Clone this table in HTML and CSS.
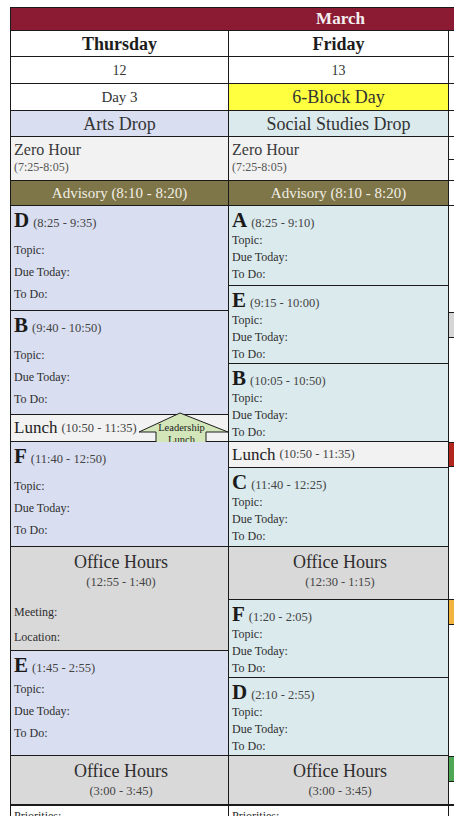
FILE: index.html
```html
<!DOCTYPE html>
<html lang="en">
<head>
<meta charset="utf-8">
<title>March Planner</title>
<link rel="stylesheet" href="styles.css">
</head>
<body>
<div class="sheet">
  <div class="month">March</div>
  <div class="hdr">
    <div class="cell day">Thursday</div>
    <div class="cell day">Friday</div>
    <div class="cell day"></div>

    <div class="cell date">12</div>
    <div class="cell date">13</div>
    <div class="cell date"></div>

    <div class="cell dtype">Day 3</div>
    <div class="cell dtype six">6-Block Day</div>
    <div class="cell dtype"></div>

    <div class="cell drop thu">Arts Drop</div>
    <div class="cell drop fri">Social Studies Drop</div>
    <div class="cell drop"></div>

    <div class="cell zero"><div class="zt">Zero Hour</div><div class="zs">(7:25-8:05)</div></div>
    <div class="cell zero"><div class="zt">Zero Hour</div><div class="zs">(7:25-8:05)</div></div>
    <div class="cell blank"><div class="zsplit"></div></div>

    <div class="cell adv">Advisory (8:10 - 8:20)</div>
    <div class="cell adv">Advisory (8:10 - 8:20)</div>
    <div class="cell blank"></div>
  </div>

  <div class="sched">
    <div class="col">
      <div class="blk thu h105">
        <div class="bh"><span class="letter">D</span> <span class="time">(8:25 - 9:35)</span></div>
        <div class="lines wide"><div>Topic:</div><div>Due Today:</div><div>To Do:</div></div>
      </div>
      <div class="blk thu h104">
        <div class="bh"><span class="letter">B</span> <span class="time">(9:40 - 10:50)</span></div>
        <div class="lines wide"><div>Topic:</div><div>Due Today:</div><div>To Do:</div></div>
      </div>
      <div class="blk lunch h27">
        <span class="lt">Lunch</span> <span class="time">(10:50 - 11:35)</span>
        <svg class="arrow" width="92" height="30" viewBox="0 0 92 30">
          <polygon points="42,1 90,20 68,20 68,40 18,40 18,20 1,20" fill="#d2e6b9" stroke="#1e1e1e" stroke-width="1"/>
          <text x="43.5" y="19" text-anchor="middle" font-family="Liberation Serif, serif" font-size="10.5" fill="#222">Leadership</text>
          <text x="43.5" y="31" text-anchor="middle" font-family="Liberation Serif, serif" font-size="10.5" fill="#222">Lunch</text>
        </svg>
      </div>
      <div class="blk thu h105">
        <div class="bh"><span class="letter">F</span> <span class="time">(11:40 - 12:50)</span></div>
        <div class="lines wide"><div>Topic:</div><div>Due Today:</div><div>To Do:</div></div>
      </div>
      <div class="blk oh h104">
        <div class="oht">Office Hours</div>
        <div class="ohs">(12:55 - 1:40)</div>
        <div class="ohl"><div>Meeting:</div><div>Location:</div></div>
      </div>
      <div class="blk thu h105">
        <div class="bh"><span class="letter">E</span> <span class="time">(1:45 - 2:55)</span></div>
        <div class="lines wide tight"><div>Topic:</div><div>Due Today:</div><div>To Do:</div></div>
      </div>
      <div class="blk oh h49">
        <div class="oht">Office Hours</div>
        <div class="ohs">(3:00 - 3:45)</div>
      </div>
    </div>

    <div class="col">
      <div class="blk fri h80">
        <div class="bh"><span class="letter">A</span> <span class="time">(8:25 - 9:10)</span></div>
        <div class="lines"><div>Topic:</div><div>Due Today:</div><div>To Do:</div></div>
      </div>
      <div class="blk fri h78">
        <div class="bh"><span class="letter">E</span> <span class="time">(9:15 - 10:00)</span></div>
        <div class="lines"><div>Topic:</div><div>Due Today:</div><div>To Do:</div></div>
      </div>
      <div class="blk fri h78">
        <div class="bh"><span class="letter">B</span> <span class="time">(10:05 - 10:50)</span></div>
        <div class="lines"><div>Topic:</div><div>Due Today:</div><div>To Do:</div></div>
      </div>
      <div class="blk lunch h26">
        <span class="lt">Lunch</span> <span class="time">(10:50 - 11:35)</span>
      </div>
      <div class="blk fri h79">
        <div class="bh"><span class="letter">C</span> <span class="time">(11:40 - 12:25)</span></div>
        <div class="lines"><div>Topic:</div><div>Due Today:</div><div>To Do:</div></div>
      </div>
      <div class="blk oh h53">
        <div class="oht">Office Hours</div>
        <div class="ohs">(12:30 - 1:15)</div>
      </div>
      <div class="blk fri h78">
        <div class="bh"><span class="letter">F</span> <span class="time">(1:20 - 2:05)</span></div>
        <div class="lines"><div>Topic:</div><div>Due Today:</div><div>To Do:</div></div>
      </div>
      <div class="blk fri h78">
        <div class="bh"><span class="letter">D</span> <span class="time">(2:10 - 2:55)</span></div>
        <div class="lines"><div>Topic:</div><div>Due Today:</div><div>To Do:</div></div>
      </div>
      <div class="blk oh h49">
        <div class="oht">Office Hours</div>
        <div class="ohs">(3:00 - 3:45)</div>
      </div>
    </div>

    <div class="col">
      <div class="blk plain h107"></div>
      <div class="blk grey h25"></div>
      <div class="blk plain h105"></div>
      <div class="blk red h24"></div>
      <div class="blk plain h133"></div>
      <div class="blk orange h25"></div>
      <div class="blk plain h132"></div>
      <div class="blk green h25"></div>
      <div class="blk plain h23"></div>
    </div>
  </div>

  <div class="prio">
    <div class="pcell">Priorities:</div>
    <div class="pcell">Priorities:</div>
    <div class="pcell"></div>
  </div>
</div>
</body>
</html>
```

FILE: styles.css
```css
html, body {
  margin: 0;
  padding: 0;
  overflow: hidden;
  background: #ffffff;
}

body {
  font-family: "Liberation Serif", "DejaVu Serif", serif;
  color: #2a2a2a;
}

.sheet {
  margin: 7px 0 0 10px;
  width: 659px;
  border-left: 1px solid #1a1a1a;
  border-top: 1px solid #1a1a1a;
}

.month {
  box-sizing: border-box;
  height: 23px;
  background: #8a1b33;
  color: #f4eef0;
  font-weight: bold;
  font-size: 17px;
  display: flex;
  align-items: center;
  justify-content: center;
  border-bottom: 1px solid #1a1a1a;
}

.hdr {
  display: grid;
  grid-template-columns: 218px 220px 220px;
  grid-template-rows: 26px 27px 27px 26px 44px 25px;
}

.cell {
  box-sizing: border-box;
  border-right: 1px solid #1a1a1a;
  border-bottom: 1px solid #1a1a1a;
  display: flex;
  align-items: center;
  justify-content: center;
  background: #ffffff;
}

.day {
  font-weight: bold;
  font-size: 18px;
  color: #1c1c1c;
  padding-top: 1px;
}

.date {
  font-size: 14px;
  color: #333333;
  padding-top: 1px;
}

.dtype {
  font-size: 15px;
  color: #333333;
  padding-top: 1px;
}

.dtype.six {
  background: #ffff40;
  font-size: 18px;
}

.drop {
  font-size: 18px;
  color: #333333;
  padding-top: 2px;
}

.thu {
  background: #d9def1;
}

.fri {
  background: #dbeaed;
}

.zero {
  background: #f2f2f2;
  flex-direction: column;
  align-items: flex-start;
  justify-content: flex-start;
  padding: 3px 0 0 3px;
}

.zt {
  font-size: 16px;
  line-height: 20px;
  color: #3a3a3a;
}

.zs {
  font-size: 12px;
  line-height: 14px;
  color: #555555;
}

.blank {
  align-items: flex-start;
}

.zsplit {
  width: 100%;
  height: 22px;
  border-bottom: 1px solid #1a1a1a;
}

.adv {
  background: #7e7548;
  color: #f1efe6;
  font-size: 15px;
  padding-top: 1px;
}

.sched {
  display: grid;
  grid-template-columns: 218px 220px 220px;
  height: 599px;
}

.col {
  display: flex;
  flex-direction: column;
  border-right: 1px solid #1a1a1a;
}

.blk {
  box-sizing: border-box;
  border-bottom: 1px solid #1a1a1a;
  padding: 2px 0 0 3px;
  flex: none;
}

.bh {
  line-height: 24px;
  height: 24px;
  white-space: nowrap;
}

.letter {
  font-weight: bold;
  font-size: 21px;
  color: #1a1a1a;
}

.time {
  font-size: 12.5px;
  color: #444444;
}

.lines {
  font-size: 12px;
  line-height: 17px;
  color: #2e2e2e;
}

.lines.wide {
  margin-top: 7px;
  line-height: 22px;
}

.lines.wide.tight {
  margin-top: 1px;
}

.lunch {
  position: relative;
  background: #f2f2f2;
  padding: 0 0 0 3px;
  display: flex;
  align-items: center;
  white-space: nowrap;
}

.lunch .lt {
  font-size: 17px;
  color: #222222;
  margin-right: 4px;
}

.arrow {
  position: absolute;
  left: 127px;
  top: -3px;
  overflow: hidden;
}

.oh {
  background: #d9d9d9;
  padding: 3px 0 0 3px;
}

.oht {
  text-align: center;
  font-size: 18px;
  line-height: 24px;
  color: #2e2e2e;
}

.ohs {
  text-align: center;
  font-size: 12.5px;
  line-height: 16px;
  color: #444444;
}

.ohl {
  margin-top: 10px;
  font-size: 12px;
  line-height: 25px;
  color: #2e2e2e;
}

.plain { background: #ffffff; }
.grey { background: #d6d6d6; }
.red { background: #b3261e; }
.orange { background: #f3b43f; }
.green { background: #4da755; }

.h23 { height: 23px; }
.h24 { height: 24px; }
.h25 { height: 25px; }
.h26 { height: 26px; }
.h27 { height: 27px; }
.h49 { height: 49px; }
.h53 { height: 53px; }
.h78 { height: 78px; }
.h79 { height: 79px; }
.h80 { height: 80px; }
.h104 { height: 104px; }
.h105 { height: 105px; }
.h107 { height: 107px; }
.h132 { height: 132px; }
.h133 { height: 133px; }

.prio {
  display: grid;
  grid-template-columns: 218px 220px 220px;
  height: 40px;
  border-top: 1px solid #1a1a1a;
}

.pcell {
  box-sizing: border-box;
  border-right: 1px solid #1a1a1a;
  padding: 2px 0 0 3px;
  font-size: 12px;
  line-height: 16px;
  color: #2a2a2a;
}
```
